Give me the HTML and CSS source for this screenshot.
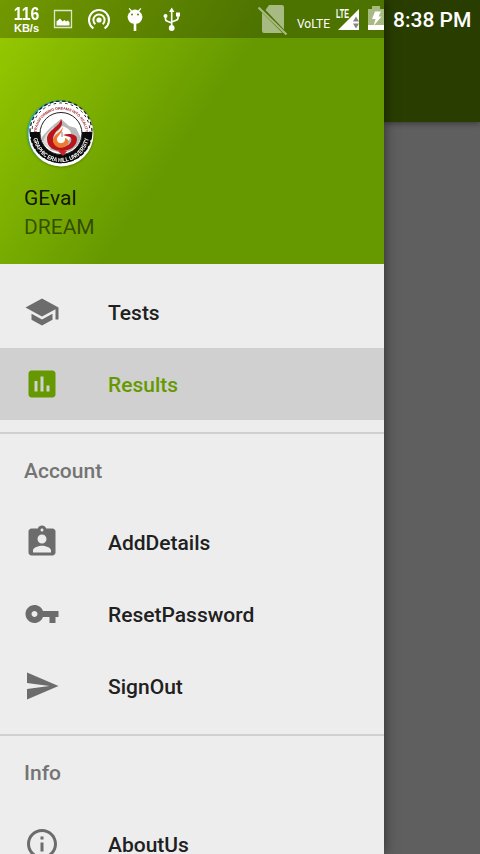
FILE: index.html
```html
<!DOCTYPE html>
<html lang="en">
<head>
<meta charset="utf-8">
<title>GEval</title>
<link rel="stylesheet" href="styles.css">
</head>
<body>
<div class="screen">
  <aside class="drawer">
    <header class="profile">
      <svg class="logo" viewBox="0 0 68 68">
        <defs>
          <path id="arc-top" d="M9.500 34A24.500 24.500 0 0 1 58.500 34"/>
          <path id="arc-bottom" d="M6 34A28 28 0 0 0 62 34"/>
        </defs>
        <circle cx="32.600" cy="33" r="32.400" fill="#27a9a5"/>
        <circle cx="34" cy="34" r="32.500" fill="#fff"/>
        <path d="M2.500 32H65.500A31.500 31.500 0 0 1 2.500 32Z" fill="#0a0a0a"/>
        <path d="M3 32A31 31 0 0 1 65 32" fill="none" stroke="#222" stroke-width="1.300" stroke-dasharray="3.600 2.600"/>
        <path d="M5 32A29 29 0 0 1 63 32" fill="none" stroke="#222" stroke-width="1" stroke-dasharray="2.600 3.200" stroke-dashoffset="-3.200"/>
        <path d="M2.800 37A31.500 31.500 0 0 0 65.200 37" fill="none" stroke="#fff" stroke-width="2" stroke-dasharray="1.800 4.700"/>
        <circle cx="34" cy="33.500" r="21" fill="#fff" stroke="#222" stroke-width="1"/>
        <path d="M14 38L22 29L29 23L34 19L42 26L49 28L54 38L50 46L43 51L34 53L24 50L17 44Z" fill="#b9b9b9"/>
        <path d="M19 35L27 26L25 34L30 29L31 40L23 49L16 42Z" fill="#dedede"/>
        <path d="M35 26C42 28 46 32 43 38C40 45 31 46 28 41C26 36 31 32 35 26Z" fill="#fff"/>
        <path d="M34 19C33 27 20 30 20 39C20 48 28 51 35 51C43 51 50 46 50 39C50 34 42 33 36 35L43 37C47 40 42 47 35 47C26 47 22 37 32 29C35 26 36 23 34 19Z" fill="#b9151a"/>
        <path d="M35 26C37 31 26 34 26 40C26 47 34 50 39 46C43 43 42 39 38 38C39 44 31 45 30 40C29 36 38 32 35 26Z" fill="#ed7b2f"/>
        <path d="M35 32V37" stroke="#888"/><path d="M31 51H40L36 56Z" fill="#c8252a"/>
        <text class="motto"><textPath href="#arc-top" startOffset="50%" text-anchor="middle" textLength="73">TRANSFORMING DREAMS INTO REALITY</textPath></text>
        <text class="school"><textPath href="#arc-bottom" startOffset="50%" text-anchor="middle" textLength="79" lengthAdjust="spacingAndGlyphs">GRAPHIC ERA HILL UNIVERSITY</textPath></text>
      </svg>
      <div class="name">GEval</div>
      <div class="tagline">DREAM</div>
    </header>
    <nav class="menu">
      <a class="item"><svg class="icon" viewBox="0 0 24 24"><path d="M5 13.180v4L12 21l7-3.820v-4L12 17l-7-3.820zM12 3L1 9l11 6 9-4.910V17h2V9L12 3z"/></svg><span class="label">Tests</span></a>
      <a class="item selected"><svg class="icon" viewBox="0 0 24 24"><path d="M19 3H5c-1.100 0-2 .9-2 2v14c0 1.100.9 2 2 2h14c1.100 0 2-.9 2-2V5c0-1.100-.9-2-2-2zM9 17H7v-7h2v7zm4 0h-2V7h2v10zm4 0h-2v-4h2v4z"/></svg><span class="label">Results</span></a>
      <section class="group">
        <h2 class="heading">Account</h2>
        <a class="item"><svg class="icon" viewBox="0 0 24 24"><path d="M19 3h-4.180C14.400 1.840 13.300 1 12 1c-1.300 0-2.400.84-2.820 2H5c-1.100 0-2 .9-2 2v14c0 1.100.9 2 2 2h14c1.100 0 2-.9 2-2V5c0-1.100-.9-2-2-2zm-7 0c.55 0 1 .45 1 1s-.45 1-1 1-1-.45-1-1 .45-1 1-1zm0 4c1.660 0 3 1.340 3 3s-1.340 3-3 3-3-1.340-3-3 1.340-3 3-3zm6 12H6v-1.400c0-2 4-3.100 6-3.100s6 1.100 6 3.100V19z"/></svg><span class="label">AddDetails</span></a>
        <a class="item"><svg class="icon" viewBox="0 0 24 24"><path d="M12.650 10C11.830 7.670 9.610 6 7 6c-3.310 0-6 2.690-6 6s2.690 6 6 6c2.610 0 4.830-1.670 5.650-4H17v4h4v-4h2v-4H12.650zM7 14c-1.100 0-2-.9-2-2s.9-2 2-2 2 .9 2 2-.9 2-2 2z"/></svg><span class="label">ResetPassword</span></a>
        <a class="item"><svg class="icon" viewBox="0 0 24 24"><path d="M2.010 21L23 12 2.010 3 2 10l15 2-15 2z"/></svg><span class="label">SignOut</span></a>
      </section>
      <section class="group">
        <h2 class="heading">Info</h2>
        <a class="item"><svg class="icon" viewBox="0 0 24 24"><path d="M11 17h2v-6h-2v6zm1-15C6.480 2 2 6.480 2 12s4.480 10 10 10 10-4.480 10-10S17.520 2 12 2zm0 18c-4.410 0-8-3.590-8-8s3.590-8 8-8 8 3.590 8 8-3.590 8-8 8zM11 9h2V7h-2v2z"/></svg><span class="label">AboutUs</span></a>
      </section>
    </nav>
  </aside>
  <main class="backdrop"><div class="appbar"></div></main>
  <div class="statusbar">
    <div class="scrim"></div>
    <div class="speed"><span class="rate">116</span><span class="unit">KB/s</span></div>
    <svg class="notifications" viewBox="0 0 135 38" fill="#fff">
      <path d="M4.500 10.500H21.500V27.500H4.500Z" fill="none" stroke="#dce5cd" stroke-width="1.300"/>
      <path d="M6.500 25.500V21.500L10 18.500L12.500 21.500L14.500 20L16 21.500L18 20.500L19.500 22.500V25.500Z"/>
      <circle cx="49" cy="20" r="2.600"/>
      <path d="M45.300 24.200A5.600 5.600 0 1 1 52.700 24.200M43.400 28.300A10 10 0 1 1 54.600 28.300" fill="none" stroke="#fff" stroke-width="2"/>
      <path fill-rule="evenodd" d="M79.500 8L82 10.500Q85 8.500 88 10.500L90.500 8L91.300 8.700L89.300 11.300Q92.500 14 92.500 17Q91.500 23.200 86.300 23.800V31H83.700V23.800Q78.500 23.200 77.500 17Q77.500 14 80.700 11.300L78.700 8.700ZM82 13.500A1 1 0 1 0 82 15.500A1 1 0 1 0 82 13.500ZM88 13.500A1 1 0 1 0 88 15.500A1 1 0 1 0 88 13.500Z"/>
      <path d="M121.700 12V27M115.500 16V19Q115.500 21 118 21.500L121.700 23M128 15V18Q128 20 125.500 20.500L121.700 22" fill="none" stroke="#fff" stroke-width="1.600"/>
      <path d="M121.700 7.500L124.500 12H119Z"/><circle cx="121.700" cy="28" r="2.900"/><circle cx="115.500" cy="16" r="2"/><path d="M126 12.500H130V16.500H126Z"/>
    </svg>
    <div class="signal">
      <svg class="nosim" viewBox="0 0 30 32" fill="#a6ba82">
        <path d="M11 1H24Q26 1 26 3V25.500L7.500 6ZM4 8.500L24.500 29H6Q4 29 4 27Z"/>
        <path d="M.5 3.500L28.500 30.500" stroke="#a6ba82" stroke-width="2.200"/>
      </svg>
      <span class="volte">VoLTE</span>
      <svg class="bars" viewBox="0 0 24 24">
        <text class="lte" x="0" y="10.500" textLength="13" lengthAdjust="spacingAndGlyphs">LTE</text>
        <path d="M2 23L23 2V23Z" fill="#fff"/>
        <path d="M17 14.500L20 9.500L23 14.500ZM17 16.500H23L20 21.500Z" fill="#858585"/>
      </svg>
      <svg class="battery" viewBox="0 0 16 24">
        <path d="M0 3H4V0H12V3H16V24H0Z" fill="#a6ba82"/><path d="M0 19H16V24H0Z" fill="#fff"/>
        <path d="M7 5.500H13L10.500 10.500H13.500L5.500 20L7.500 13H4Z" fill="#fff"/>
      </svg>
    </div>
    <div class="clock">8:38 PM</div>
  </div>
</div>
</body>
</html>
```
FILE: styles.css
```css
* { box-sizing: border-box; }
body { margin: 0; font-family: Roboto, "Liberation Sans", sans-serif; }
.screen { position: relative; display: flex; width: 480px; height: 854px; overflow: hidden; background: #5f5f5f; }
.drawer { position: relative; z-index: 1; width: 384px; height: 854px; background: #ededed; box-shadow: 0 0 12px rgba(0, 0, 0, .55); }
.profile { height: 264px; padding: 100px 24px 0; background: linear-gradient(124.5deg, #99cc00 0%, #669900 50%); font-size: 21px; line-height: 29px; }
.logo { display: block; width: 68px; height: 68px; margin-left: 3px; margin-bottom: 16px; overflow: visible; filter: drop-shadow(0 1px 1px rgba(0, 0, 0, .25)); }
.motto { font: bold 3.700px "Liberation Sans", sans-serif; fill: #a32028; }
.school { font: bold 6px "Liberation Sans", sans-serif; fill: #fff; }
.name { color: rgba(0, 0, 0, .87); }
.tagline { color: rgba(0, 0, 0, .54); }
.menu { padding-top: 12px; }
.item { display: flex; align-items: center; gap: 48px; height: 72px; padding: 0 24px; color: #202020; font-size: 21px; font-weight: 500; }
.label { padding-top: 2px; }
.icon { width: 36px; height: 36px; fill: #6c6c6c; }
.selected { background: #d0d0d0; color: #669900; }
.selected .icon { fill: #669900; }
.group { margin-top: 12px; border-top: 2px solid #d0d0d0; }
.heading { height: 72px; margin: 0; padding: 0 24px; color: #747474; font-size: 21px; font-weight: 500; line-height: 75px; }
.backdrop { flex: 1; }
.appbar { height: 122px; background: #293d00; box-shadow: 0 2px 5px rgba(0, 0, 0, .35); }
.statusbar { position: absolute; z-index: 2; top: 0; left: 0; display: flex; width: 480px; height: 38px; color: #fff; }
.scrim { position: absolute; z-index: -1; top: 0; left: 0; width: 384px; height: 38px; background: rgba(0, 0, 0, .25); }
.speed { display: flex; flex-direction: column; align-items: center; width: 27px; margin-left: 13px; padding-top: 5px; font-family: "Liberation Sans", sans-serif; font-weight: bold; }
.rate { font-size: 18px; line-height: 18px; transform: scaleX(.88); }
.unit { font-size: 11px; line-height: 11px; }
.notifications { width: 135px; height: 38px; margin-left: 10px; }
.signal { display: flex; align-items: flex-start; width: 126px; margin-left: 73px; }
.nosim { width: 30px; height: 32px; margin-top: 4px; }
.volte { width: 34px; margin: 16px 5px 0 9px; font-size: 12px; line-height: 16px; }
.bars { width: 24px; height: 24px; margin-top: 7px; overflow: visible; }
.lte { font: bold 12px "Liberation Sans", sans-serif; fill: #fff; }
.battery { width: 16px; height: 24px; margin: 6px 0 0 8px; }
.clock { margin-left: 9px; font-size: 21px; font-weight: 500; line-height: 41px; white-space: nowrap; }
```
